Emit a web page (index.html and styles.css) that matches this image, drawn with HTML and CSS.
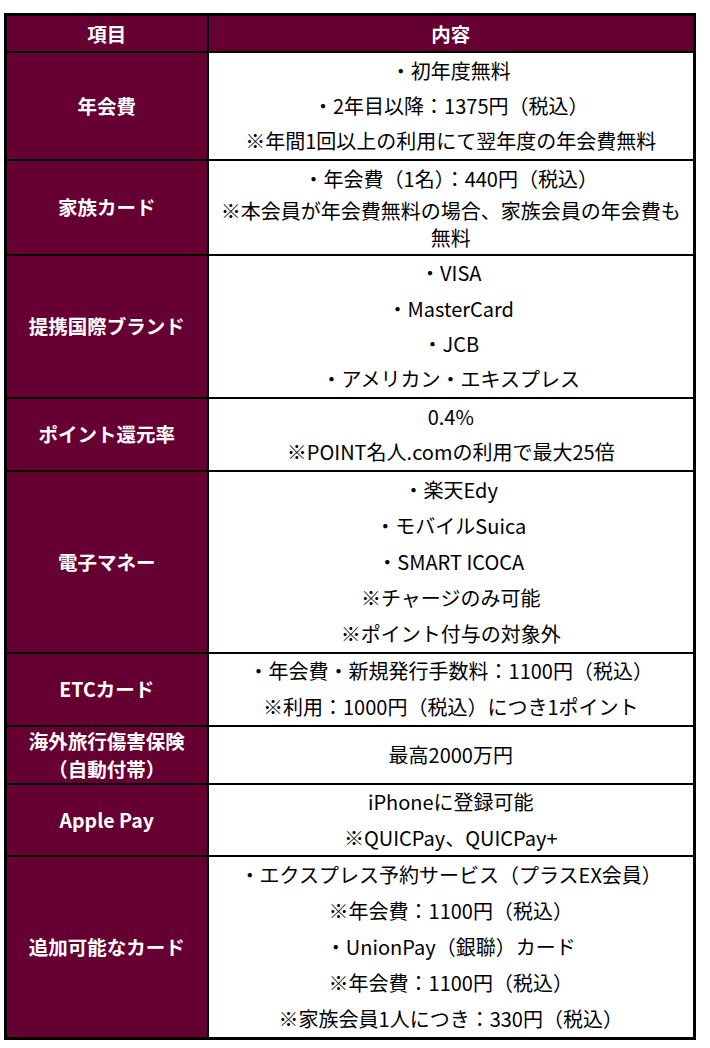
FILE: index.html
```html
<!DOCTYPE html>
<html lang="ja">
<head>
<meta charset="utf-8">
<link rel="stylesheet" href="styles.css">
</head>
<body>
<table class="spec">
  <colgroup><col class="c1"><col class="c2"></colgroup>
  <thead>
    <tr><th>項目</th><th>内容</th></tr>
  </thead>
  <tbody>
    <tr>
      <th>年会費</th>
      <td><div class="ln">・初年度無料</div><div class="ln">・2年目以降：1375円（税込）</div><div class="ln">※年間1回以上の利用にて翌年度の年会費無料</div></td>
    </tr>
    <tr>
      <th>家族カード</th>
      <td><div class="ln">・年会費（1名）：440円（税込）</div><div class="wrap">※本会員が年会費無料の場合、家族会員の年会費も<br>無料</div></td>
    </tr>
    <tr>
      <th>提携国際ブランド</th>
      <td><div class="ln">・VISA</div><div class="ln">・MasterCard</div><div class="ln">・JCB</div><div class="ln">・アメリカン・エキスプレス</div></td>
    </tr>
    <tr>
      <th>ポイント還元率</th>
      <td><div class="ln">0.4%</div><div class="ln">※POINT名人.comの利用で最大25倍</div></td>
    </tr>
    <tr>
      <th>電子マネー</th>
      <td class="tall"><div class="ln">・楽天Edy</div><div class="ln">・モバイルSuica</div><div class="ln">・SMART ICOCA</div><div class="ln">※チャージのみ可能</div><div class="ln">※ポイント付与の対象外</div></td>
    </tr>
    <tr>
      <th>ETCカード</th>
      <td><div class="ln">・年会費・新規発行手数料：1100円（税込）</div><div class="ln">※利用：1000円（税込）につき1ポイント</div></td>
    </tr>
    <tr>
      <th class="two">海外旅行傷害保険<br>（自動付帯）</th>
      <td><div class="ln">最高2000万円</div></td>
    </tr>
    <tr>
      <th>Apple Pay</th>
      <td><div class="ln">iPhoneに登録可能</div><div class="ln">※QUICPay、QUICPay+</div></td>
    </tr>
    <tr>
      <th>追加可能なカード</th>
      <td class="tall"><div class="ln">・エクスプレス予約サービス（プラスEX会員）</div><div class="ln">※年会費：1100円（税込）</div><div class="ln">・UnionPay（銀聯）カード</div><div class="ln">※年会費：1100円（税込）</div><div class="ln">※家族会員1人につき：330円（税込）</div></td>
    </tr>
  </tbody>
</table>
</body>
</html>
```
FILE: styles.css
```css
html, body {
  margin: 0;
  padding: 0;
  background: #ffffff;
}
body {
  padding: 13px 0 0 4px;
  font-family: "Noto Sans CJK JP", "Noto Sans", sans-serif;
  font-size: 20px;
  color: #000000;
}
.spec {
  border-collapse: collapse;
  width: 692px;
  border: 3px solid #000000;
}
.c1 { width: 202px; }
.spec th, .spec td {
  border: 2px solid #000000;
  padding: 0;
  text-align: center;
  vertical-align: middle;
}
.spec th {
  background: #660033;
  color: #ffffff;
  font-weight: bold;
  font-size: 19.5px;
  line-height: 26px;
}
.spec thead th {
  padding: 4.5px 0;
}
.spec th.two {
  line-height: 28px;
}
.ln {
  line-height: 26px;
  padding: 4.7px 0;
  white-space: nowrap;
}
.tall .ln {
  padding: 5px 0;
}
.wrap {
  line-height: 27px;
  padding: 0.5px 0 2.5px;
  white-space: nowrap;
}
```
